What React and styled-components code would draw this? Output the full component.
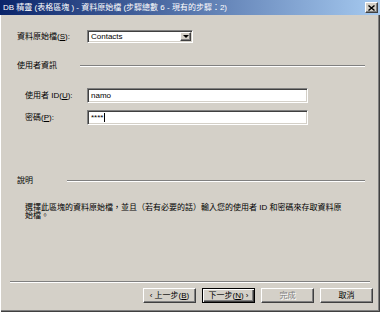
import styled, { createGlobalStyle } from 'styled-components';

const GlobalStyle = createGlobalStyle`
  body {
    margin: 0;
    background: #d4d0c8;
  }
  * {
    box-sizing: border-box;
  }
`;

const Window = styled.div`
  width: 380px;
  height: 312px;
  display: flex;
  flex-direction: column;
  background: #d4d0c8;
  box-shadow: inset 1px 0 0 #ffffff, inset -1px -1px 0 #404040, inset -2px -2px 0 #808080;
  font-family: 'Liberation Sans', 'Noto Sans CJK TC', sans-serif;
  font-size: 8px;
  line-height: 10px;
  color: #000;
`;

const TitleBar = styled.div`
  height: 15px;
  display: flex;
  align-items: center;
  justify-content: space-between;
  padding: 0 2px 0 3px;
  background: linear-gradient(to right, #0a246a, #a6caf0);
  color: #fff;
  white-space: nowrap;
`;

const CloseButton = styled.div`
  width: 13px;
  height: 11px;
  display: flex;
  align-items: center;
  justify-content: center;
  background: #d4d0c8;
  border: 1px solid;
  border-color: #fff #404040 #404040 #fff;
  box-shadow: inset -1px -1px 0 #808080;
`;

const Content = styled.div`
  display: flex;
  flex-direction: column;
  padding: 15px 15px 0 17px;
`;

const FieldRow = styled.div`
  display: flex;
  align-items: center;
  margin-top: ${({ $top }) => $top || 0}px;
`;

const Label = styled.label`
  width: ${({ $indent }) => ($indent ? 62 : 70)}px;
  margin-left: ${({ $indent }) => ($indent ? 8 : 0)}px;
  white-space: nowrap;
`;

const Sunken = styled.div`
  height: ${({ $h }) => $h}px;
  width: ${({ $w }) => $w}px;
  display: flex;
  align-items: center;
  background: #fff;
  border: 1px solid;
  border-color: #808080 #fff #fff #808080;
  box-shadow: inset 1px 1px 0 #404040, inset -1px -1px 0 #d4d0c8;
  padding: 0 1px 0 3px;
`;

const FieldText = styled.span`
  flex: 1;
  white-space: nowrap;
`;

const Caret = styled.span`
  display: inline-block;
  width: 1px;
  height: 9px;
  background: #000;
  margin-left: 1px;
  vertical-align: middle;
`;

const DropButton = styled.div`
  width: 11px;
  height: 9px;
  display: flex;
  align-items: center;
  justify-content: center;
  background: #d4d0c8;
  border: 1px solid;
  border-color: #fff #404040 #404040 #fff;
  box-shadow: inset -1px -1px 0 #808080;
  &::after {
    content: '';
    border-left: 3px solid transparent;
    border-right: 3px solid transparent;
    border-top: 3px solid #000;
  }
`;

const GroupHeader = styled.div`
  display: flex;
  align-items: center;
  margin-top: ${({ $top }) => $top}px;
  padding-right: 0;
`;

const GroupTitle = styled.span`
  width: ${({ $w }) => $w}px;
  white-space: nowrap;
`;

const Groove = styled.div`
  flex: 1;
  height: 2px;
  border-top: 1px solid #808080;
  border-bottom: 1px solid #fff;
`;

const Description = styled.p`
  margin: 18px 0 0 8px;
  width: 322px;
  line-height: 8px;
`;

const Footer = styled.div`
  margin-top: auto;
  display: flex;
  flex-direction: column;
  padding: 0 7px 9px 10px;
`;

const Separator = styled(Groove)`
  flex: none;
  margin-right: 3px;
`;

const ButtonRow = styled.div`
  display: flex;
  justify-content: flex-end;
  gap: 6px;
  margin-top: 5px;
`;

const Button = styled.div`
  width: 53px;
  height: 15px;
  display: flex;
  align-items: center;
  justify-content: center;
  white-space: nowrap;
  background: #d4d0c8;
  border: 1px solid;
  border-color: ${({ $default }) => ($default ? '#000' : '#fff #404040 #404040 #fff')};
  box-shadow: ${({ $default }) =>
    $default
      ? 'inset 1px 1px 0 #fff, inset -1px -1px 0 #404040, inset -2px -2px 0 #808080'
      : 'inset -1px -1px 0 #808080'};
  color: ${({ $disabled }) => ($disabled ? '#808080' : '#000')};
  text-shadow: ${({ $disabled }) => ($disabled ? '1px 1px 0 #fff' : 'none')};
`;

function App() {
  return (
    <>
      <GlobalStyle />
      <Window>
        <TitleBar>
          <span>DB 精靈 (表格區塊 ) - 資料原始檔 (步驟總數 6 - 現有的步驟：2)</span>
          <CloseButton>
            <svg width="7" height="6" viewBox="0 0 7 6">
              <path d="M0.5 0.5 L6.5 5.5 M6.5 0.5 L0.5 5.5" stroke="#000" strokeWidth="1.4" />
            </svg>
          </CloseButton>
        </TitleBar>

        <Content>
          <FieldRow>
            <Label>
              資料原始檔(<u>S</u>):
            </Label>
            <Sunken $w={106} $h={13}>
              <FieldText>Contacts</FieldText>
              <DropButton />
            </Sunken>
          </FieldRow>

          <GroupHeader $top={18}>
            <GroupTitle $w={63}>使用者資訊</GroupTitle>
            <Groove />
          </GroupHeader>

          <FieldRow $top={17}>
            <Label $indent>
              使用者 ID(<u>U</u>):
            </Label>
            <Sunken $w={221} $h={15}>
              <FieldText>namo</FieldText>
            </Sunken>
          </FieldRow>

          <FieldRow $top={7}>
            <Label $indent>
              密碼(<u>P</u>):
            </Label>
            <Sunken $w={221} $h={15}>
              <FieldText>
                ****
                <Caret />
              </FieldText>
            </Sunken>
          </FieldRow>

          <GroupHeader $top={51}>
            <GroupTitle $w={50}>說明</GroupTitle>
            <Groove />
          </GroupHeader>

          <Description>
            選擇此區塊的資料原始檔，並且（若有必要的話）輸入您的使用者 ID 和密碼來存取資料原始檔。
          </Description>
        </Content>

        <Footer>
          <Separator />
          <ButtonRow>
            <Button>
              ‹ 上一步(<u>B</u>)
            </Button>
            <Button $default>
              下一步(<u>N</u>) ›
            </Button>
            <Button $disabled>完成</Button>
            <Button>取消</Button>
          </ButtonRow>
        </Footer>
      </Window>
    </>
  );
}

export default App;
